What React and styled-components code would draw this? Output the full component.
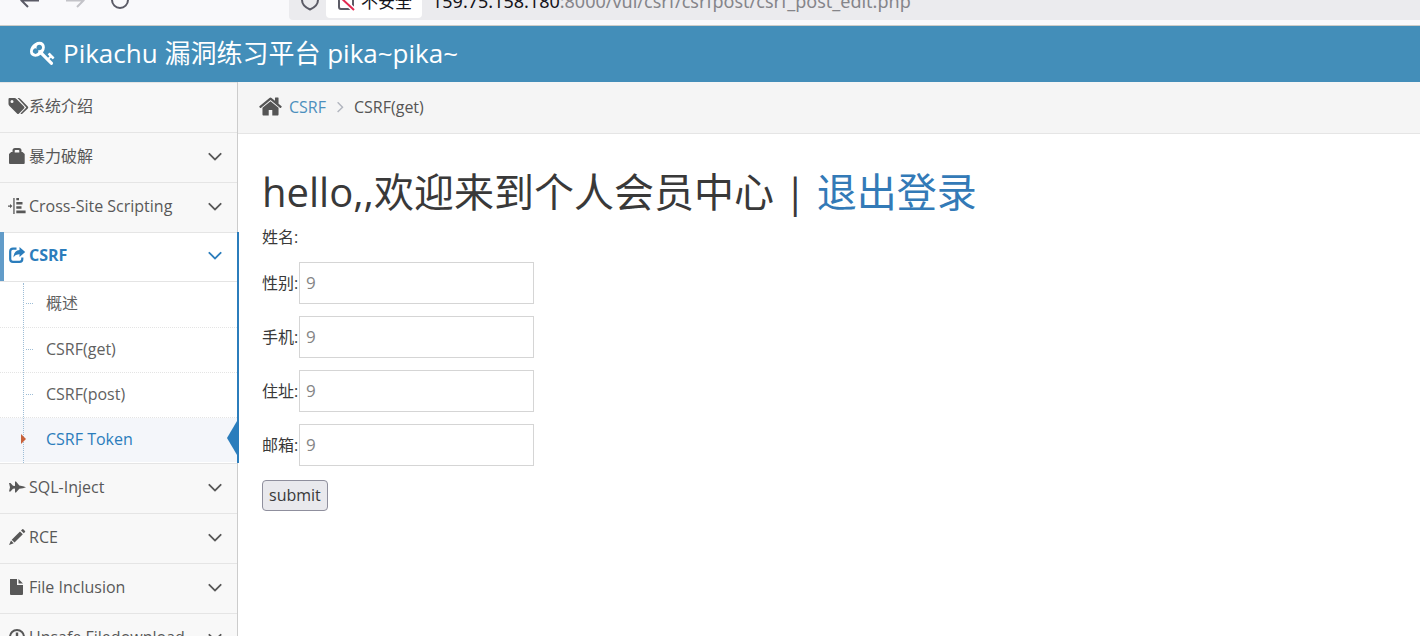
import React, { useState } from "react";
import styled, { createGlobalStyle } from "styled-components";

const GlobalStyle = createGlobalStyle`
  *, *::before, *::after {
    box-sizing: border-box;
  }
  body {
    margin: 0;
    height: 100vh;
    overflow: hidden;
    background: #fff;
    color: #393939;
    font-family: "Open Sans", "Noto Sans CJK SC", sans-serif;
    font-size: 16px;
    line-height: 24px;
  }
  a {
    text-decoration: none;
  }
`;

// 图标
const KeyIcon = () => (
  <svg width="26" height="26" viewBox="0 0 1792 1792" fill="currentColor">
    <path d="M832 512q0-80-56-136t-136-56-136 56-56 136q0 42 19 83-41-19-83-19-80 0-136 56t-56 136 56 136 136 56 136-56 56-136q0-42-19-83 41 19 83 19 80 0 136-56t56-136zm851 704q0 17-49 66t-66 49q-9 0-28.5-16t-36.5-33-38.5-40-24.500-26l-96 96 220 220q28 28 28 68 0 42-39 81t-81 39q-40 0-68-28l-671-671q-176 131-365 131-163 0-265.500-102.500t-102.500-265.500q0-160 95-313t248-248 313-95q163 0 265.500 102.500t102.500 265.500q0 189-131 365l355 355 96-96q-3-3-26-24.500t-40-38.500-33-36.500-16-28.500q0-17 49-66t66-49q13 0 23 10 6 6 46 44.500t82 79.500 86.500 86 73 78 28.500 41z" />
  </svg>
);

const HomeIcon = () => (
  <svg width="25" height="25" viewBox="0 0 1792 1792" fill="currentColor">
    <path d="M1472 992v480q0 26-19 45t-45 19h-384v-384h-256v384h-384q-26 0-45-19t-19-45v-480q0-1 .5-3t.5-3l575-474 575 474q1 2 1 6zm223-69l-62 74q-8 9-21 11h-3q-13 0-21-7l-692-577-692 577q-12 8-24 7-13-2-21-11l-62-74q-8-10-7-23.500t11-21.500l719-599q32-26 76-26t76 26l244 204v-195q0-14 9-23t23-9h192q14 0 23 9t9 23v408l219 182q10 8 11 21.500t-7 23.500z" />
  </svg>
);

const AngleDown = () => (
  <svg width="24" height="24" viewBox="0 0 1792 1792" fill="currentColor">
    <path d="M1395 736q0 13-10 23l-466 466q-10 10-23 10t-23-10l-466-466q-10-10-10-23t10-23l50-50q10-10 23-10t23 10l393 393 393-393q10-10 23-10t23 10l50 50q10 10 10 23z" />
  </svg>
);

const AngleRight = () => (
  <svg width="19" height="19" viewBox="0 0 1792 1792" fill="currentColor">
    <path d="M1171 960q0 13-10 23l-466 466q-10 10-23 10t-23-10l-50-50q-10-10-10-23t10-23l393-393-393-393q-10-10-10-23t10-23l50-50q10-10 23-10t23 10l466 466q10 10 10 23z" />
  </svg>
);

const icons = {
  tags: (
    <>
      <path
        fillRule="evenodd"
        d="M-.5 1Q-.5 0 .5 0H5.500Q6.500 0 7.500 1L15 8.500Q16 9.500 15 10.500L10 15.500Q9 16.500 8 15.500L.5 8Q-.5 7 -.5 6ZM3 2a1.500 1.500 0 1 0 0 3a1.500 1.500 0 1 0 0-3Z"
      />
      <path d="M8.500 0H9.500Q10.500 0 11.500 1L18.800 8.500Q19.800 9.500 18.800 10.500L13.500 15.500Q12.500 16.500 11.500 15.500L17.300 9.500Z" />
    </>
  ),
  lock: (
    <path
      fillRule="evenodd"
      d="M3.500 4V2.500Q3.500 0 6 0H10Q12.500 0 12.500 2.500V4H13.500L15.700 6V15Q15.700 16 14.700 16H1Q0 16 0 15V6L2.200 4ZM5.700 4.500H10.300V2.700Q10.300 2 9.600 2H6.400Q5.700 2 5.700 2.700Z"
    />
  ),
  align: (
    <path d="M4.300 0H5.600V16H4.300ZM-1 7.500H1V6L3.400 8.100L1 10.200V8.700H-1ZM7.300 0H10V2.200H7.300ZM7.300 4H13.500V6.500H7.300ZM7.300 8.300H12.500V10.800H7.300ZM7.300 12.500H16.600V15.300H7.300Z" />
  ),
  share: (
    <>
      <path
        fill="none"
        stroke="currentColor"
        strokeWidth="2.200"
        d="M7.500 1.600H4Q1.200 1.600 1.200 4.500V12Q1.200 14.800 4 14.800H10.500Q13.300 14.800 13.300 12V10.500"
      />
      <path d="M10.500 0L16.200 5L10.500 10V7.200Q6.500 7 4.500 10.500Q4.800 3.500 10.500 3Z" />
    </>
  ),
  plane: (
    <path d="M0 4H1.500L4 6.800L6 7V2.500H7L10.300 6.600L14 7.200L17 8.200L14 9.200L10.300 9.800L7 13.500H6V9.500L4 9.700L1.500 12.500H0L1 8.200Z" />
  ),
  pencil: (
    <path d="M12 1.500L13.300.3Q13.800-.2 14.300.3L16 2Q16.500 2.500 16 3L14.800 4.200ZM11 2.500L13.800 5.300L5.500 13.500L2.700 10.800ZM2 11.500L4.700 14.200L0 16Z" />
  ),
  file: <path d="M1 0H8V6H14V15Q14 16 13 16H2Q1 16 1 15ZM9.500 0L14 4.500H9.500Z" />,
  download: (
    <>
      <circle cx="8" cy="8" r="7" fill="none" stroke="currentColor" strokeWidth="2" />
      <path d="M6.800 3.500H9.200V8H12L8 12.500L4 8H6.800Z" />
    </>
  ),
};

// 左侧菜单
const menus = [
  { icon: "tags", title: "系统介绍" },
  { icon: "lock", title: "暴力破解", children: [] },
  { icon: "align", title: "Cross-Site Scripting", children: [] },
  {
    icon: "share",
    title: "CSRF",
    children: ["概述", "CSRF(get)", "CSRF(post)", "CSRF Token"],
  },
  { icon: "plane", title: "SQL-Inject", children: [] },
  { icon: "pencil", title: "RCE", children: [] },
  { icon: "file", title: "File Inclusion", children: [] },
  { icon: "download", title: "Unsafe Filedownload", children: [] },
];

const fields = [
  { name: "sex", label: "性别:" },
  { name: "phonenum", label: "手机:" },
  { name: "add", label: "住址:" },
  { name: "email", label: "邮箱:" },
];

const App = () => {
  const [current, setCurrent] = useState("CSRF Token");
  const [values, setValues] = useState({});

  const onChange = (e) => {
    setValues({ ...values, [e.target.name]: e.target.value });
  };

  return (
    <>
      <GlobalStyle />
      <Page>
        <BrowserBar>
          <NavIcons width="140" height="24" viewBox="0 0 140 24">
            <path d="M39 .5H22M29-7L21.500.5L28 7" stroke="#5b5b66" />
            <path d="M66 .5H83M76-7L83.500.5L77 7" stroke="#c3c3c8" />
            <circle cx="120" cy="0" r="8" stroke="#5b5b66" />
          </NavIcons>
          <AddressBar>
            <svg width="36" height="20" viewBox="0 0 36 20" fill="none">
              <path
                d="M12-6V0Q12 6 20 9.500Q28 6 28 0V-6"
                stroke="#5b5b66"
                strokeWidth="2"
              />
            </svg>
            <Security>
              <svg width="20" height="18" viewBox="0 0 20 18" fill="none">
                <path d="M3 0V7Q3 9 5 9H15Q17 9 17 7V0" stroke="#5b5b66" strokeWidth="2" />
                <path d="M3-4L18 10" stroke="#fff" strokeWidth="5" />
                <path d="M3-4L18 10" stroke="#e22850" strokeWidth="2" />
              </svg>
              <span>不安全</span>
            </Security>
            <Url>
              <b>159.75.158.180</b>:8000/vul/csrf/csrfpost/csrf_post_edit.php
            </Url>
          </AddressBar>
        </BrowserBar>

        <Navbar>
          <Brand href="#">
            <KeyIcon />
            <span>Pikachu 漏洞练习平台 pika~pika~</span>
          </Brand>
        </Navbar>

        <Container>
          <Sidebar>
            {menus.map((menu) => {
              const open = menu.children && menu.children.length > 0;
              return (
                <MenuItem key={menu.title} $open={open}>
                  <MenuLink href="#" $open={open}>
                    <MenuIcon viewBox="0 0 16 16">{icons[menu.icon]}</MenuIcon>
                    <MenuText>{menu.title}</MenuText>
                    {menu.children && <AngleDown />}
                  </MenuLink>
                  {open && (
                    <Submenu>
                      {menu.children.map((child) => (
                        <SubItem key={child} $active={child === current}>
                          <SubLink
                            href="#"
                            $active={child === current}
                            onClick={() => setCurrent(child)}
                          >
                            {child}
                          </SubLink>
                        </SubItem>
                      ))}
                    </Submenu>
                  )}
                </MenuItem>
              );
            })}
          </Sidebar>

          <Main>
            <Breadcrumb>
              <HomeIcon />
              <a href="#">CSRF</a>
              <AngleRight />
              <span>CSRF(get)</span>
            </Breadcrumb>
            <Content>
              <Title>
                hello,,欢迎来到个人会员中心 | <a href="#">退出登录</a>
              </Title>
              <form onSubmit={(e) => e.preventDefault()}>
                <Name>姓名:</Name>
                <Fields>
                  {fields.map((field) => (
                    <Field key={field.name}>
                      <Label htmlFor={field.name}>{field.label}</Label>
                      <TextField
                        id={field.name}
                        name={field.name}
                        placeholder="9"
                        value={values[field.name] || ""}
                        onChange={onChange}
                      />
                    </Field>
                  ))}
                </Fields>
                <SubmitButton type="submit">submit</SubmitButton>
              </form>
            </Content>
          </Main>
        </Container>
      </Page>
    </>
  );
};

export default App;

const Page = styled.div`
  display: flex;
  flex-direction: column;
  height: 100vh;
  overflow: hidden;
`;

const BrowserBar = styled.div`
  display: flex;
  flex: none;
  gap: 149px;
  height: 26px;
  overflow: hidden;
  background: #f9f9fb;
  border-bottom: 1px solid #ccccc8;
`;

const NavIcons = styled.svg`
  flex: none;
  fill: none;
  stroke-width: 2;
`;

const AddressBar = styled.div`
  display: flex;
  flex: 1;
  height: 20px;
  padding-left: 1px;
  background: #ebebee;
  border-radius: 0 0 0 4px;
`;

const Security = styled.div`
  display: flex;
  align-items: flex-end;
  gap: 5px;
  height: 18px;
  padding: 0 10px;
  background: #fff;
  border-radius: 0 0 4px 4px;
  color: #15141a;
  font-size: 17px;
  white-space: nowrap;

  span {
    margin-bottom: 4px;
  }
`;

const Url = styled.div`
  align-self: flex-end;
  margin: 0 0 7px 10px;
  color: #85858a;
  font-family: "Noto Sans", sans-serif;
  font-size: 18px;
  white-space: nowrap;

  b {
    color: #15141a;
    font-weight: 400;
  }
`;

const Navbar = styled.header`
  flex: none;
  display: flex;
  height: 56px;
  padding: 0 30px;
  background: #438eb9;
`;

const Brand = styled.a`
  display: flex;
  align-items: center;
  gap: 7px;
  padding-bottom: 2px;
  color: #fff;
  font-size: 26px;
`;

const Container = styled.div`
  display: flex;
  flex: 1;
  min-height: 0;
`;

const Sidebar = styled.nav`
  flex: none;
  width: 238px;
  background: #f8f8f8;
  border-right: 1px solid #ccc;
`;

const MenuItem = styled.div`
  position: relative;
  border-top: 1px solid #e5e5e5;

  &::after {
    content: "";
    display: ${({ $open }) => ($open ? "block" : "none")};
    position: absolute;
    top: -1px;
    bottom: 0;
    right: -2px;
    width: 2px;
    background: #2b7dbc;
  }
`;

const MenuLink = styled.a`
  position: relative;
  display: flex;
  align-items: center;
  height: ${({ $open }) => ($open ? 48 : 49)}px;
  padding: 0 10px 4px 9px;
  background: ${({ $open }) => ($open ? "#fff" : "#f8f8f8")};
  color: ${({ $open }) => ($open ? "#2b7dbc" : "#585858")};
  font-weight: ${({ $open }) => ($open ? 700 : 400)};

  &::before {
    content: "";
    display: ${({ $open }) => ($open ? "block" : "none")};
    position: absolute;
    top: -1px;
    bottom: -1px;
    left: 0;
    width: 4px;
    background: #629cc9;
  }
`;

const MenuIcon = styled.svg`
  flex: none;
  width: 16px;
  height: 16px;
  margin-right: 4px;
  overflow: visible;
  fill: currentColor;
`;

const MenuText = styled.span`
  flex: 1;
  white-space: nowrap;
`;

const Submenu = styled.div`
  position: relative;
  padding-bottom: 1px;
  background: #fff;

  &::before {
    content: "";
    position: absolute;
    top: 2px;
    bottom: 0;
    left: 23px;
    z-index: 1;
    border-left: 1px dotted #9dbdd6;
  }
`;

const SubItem = styled.div`
  position: relative;
  height: 45px;
  border-top: 1px dotted #e4e4e4;

  &:first-child {
    height: 46px;
    border-top-style: solid;
  }

  /* 树形连接线 / 当前项的小三角 */
  &::before {
    content: "";
    position: absolute;
    z-index: 2;
    ${({ $active }) =>
      $active
        ? `
      top: 16px;
      left: 21px;
      border: 5px solid transparent;
      border-left-color: #c86139;
      border-right: 0;
    `
        : `
      top: 21px;
      left: 26px;
      width: 7px;
      border-top: 1px dotted #9dbdd6;
    `}
  }

  &::after {
    content: "";
    display: ${({ $active }) => ($active ? "block" : "none")};
    position: absolute;
    top: 3px;
    right: 0;
    border: 17px solid transparent;
    border-right: 10px solid #2b7dbc;
    border-left: 0;
  }
`;

const SubLink = styled.a`
  display: flex;
  align-items: center;
  height: 44px;
  padding: 0 0 2px 46px;
  background: ${({ $active }) => ($active ? "#f4f6fa" : "#fff")};
  color: ${({ $active }) => ($active ? "#2b7dbc" : "#616161")};
`;

const Main = styled.main`
  flex: 1;
  min-width: 0;
`;

const Breadcrumb = styled.div`
  display: flex;
  align-items: center;
  height: 52px;
  padding: 0 20px 2px;
  background: #f5f5f5;
  border-bottom: 1px solid #e5e5e5;
  color: #555;

  a {
    margin: 0 5px 0 6px;
    color: #4c8fbd;
  }

  a + svg {
    margin-right: 4px;
    color: #b2b6bf;
  }
`;

const Content = styled.div`
  padding: 36px 24px;
`;

const Title = styled.h1`
  margin: 0 0 11px;
  font-size: 40px;
  font-weight: 400;
  line-height: 44px;

  a {
    color: #337ab7;
  }
`;

const Name = styled.p`
  margin: 0 0 13px;
`;

const Fields = styled.div`
  display: flex;
  flex-direction: column;
  gap: 12px;
  margin-bottom: 14px;
`;

const Field = styled.div`
  display: flex;
  align-items: center;
`;

const Label = styled.label`
  width: 37px;
  white-space: nowrap;
`;

const TextField = styled.input`
  width: 235px;
  height: 42px;
  padding: 0 6px 2px;
  border: 1px solid #d5d5d5;
  border-radius: 0;
  background: #fff;
  color: #858585;
  font-family: inherit;
  font-size: 17px;

  &::placeholder {
    color: #858585;
    opacity: 1;
  }
`;

const SubmitButton = styled.button`
  display: block;
  height: 31px;
  padding: 0 6px 2px;
  border: 1px solid #8f8f9d;
  border-radius: 4px;
  background: #e9e9ed;
  color: #393939;
  font-family: inherit;
  font-size: 16px;
`;
